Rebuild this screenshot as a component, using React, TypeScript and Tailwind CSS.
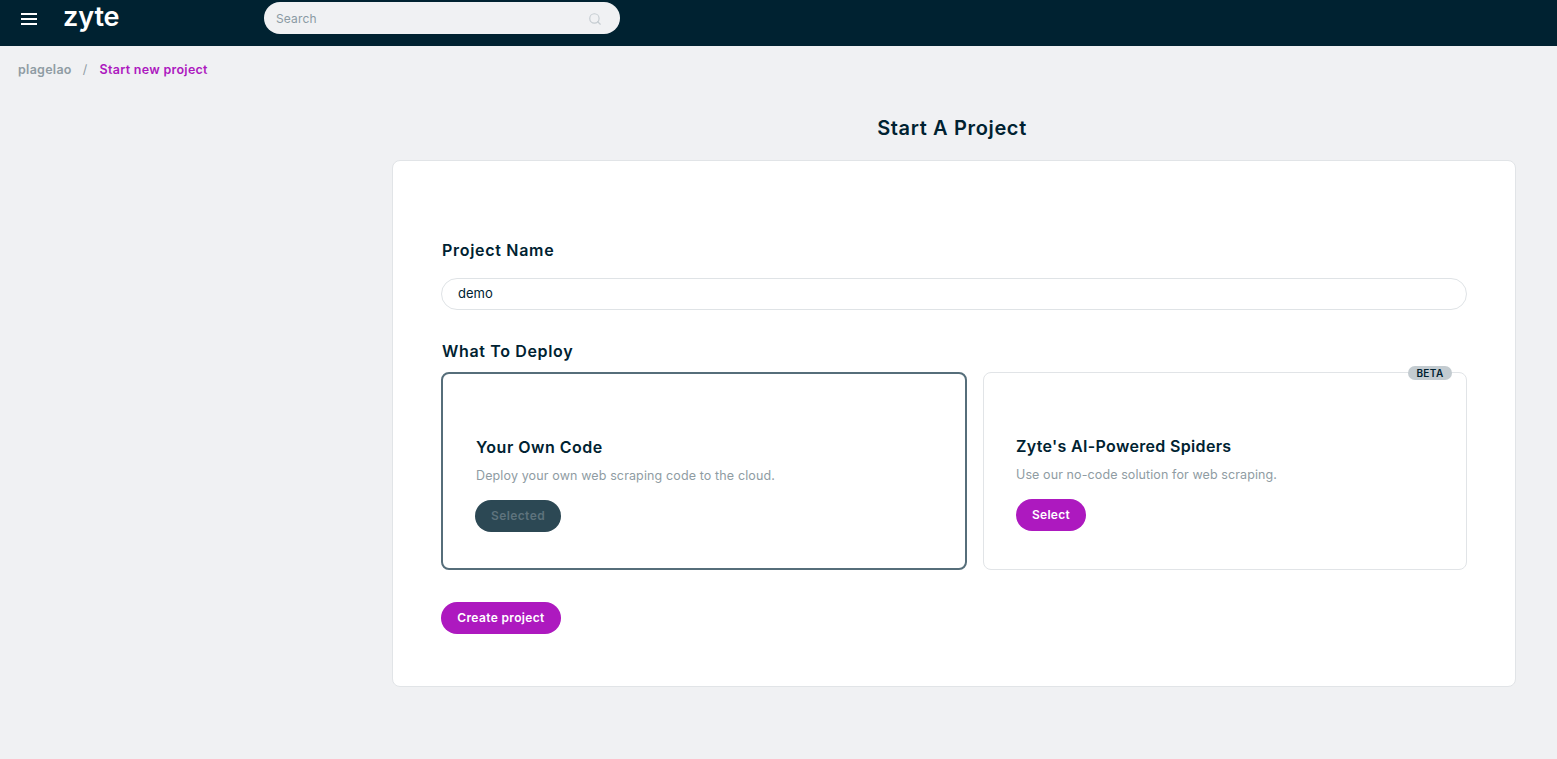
import { Search } from 'lucide-react';

const font = { fontFamily: 'Inter, "Liberation Sans", sans-serif' };

export default function App() {
  return (
    <div className="min-h-[759px] bg-[#f0f1f3]" style={font}>
      <header className="flex h-[46px] items-start bg-[#002231]">
        <div className="mt-[13px] ml-[21px] flex w-4 flex-col gap-[3px]">
          <span className="h-[2px] bg-white"></span>
          <span className="h-[2px] bg-white"></span>
          <span className="h-[2px] bg-white"></span>
        </div>
        <span className="ml-[26px] w-[57px] text-[27px] leading-[34px] font-semibold tracking-[-0.1px] text-white">zyte</span>
        <div className="mt-[2px] ml-[144px] flex h-8 w-[356px] items-center justify-between rounded-full bg-[#f0f1f3] pt-px pr-[18px] pl-3">
          <span className="text-xs tracking-[0.15px] text-[#8a9aa3]">Search</span>
          <Search className="h-[14px] w-[14px] text-[#c5ccd1]" strokeWidth={2} />
        </div>
      </header>

      <nav className="flex h-[47px] items-center pt-[2px] pl-[18px] text-[12.5px] font-semibold tracking-[0.28px]">
        <span className="text-[#8f9ca3]">plagelao</span>
        <span className="ml-[11px] font-normal text-[#8f9ca3]">/</span>
        <span className="ml-[12px] text-[#ad19bf]">Start new project</span>
      </nav>

      <main className="ml-[392px] w-[1124px]">
        <h1 className="mt-[21px] h-[46px] pr-1 text-center text-[20px] leading-7 font-semibold tracking-[0.65px] text-[#002231]">Start A Project</h1>

        <section className="h-[527px] rounded-lg border border-[#e1e4e7] bg-white px-12 pt-[79px]">
          <h2 className="ml-px text-[16px] leading-5 font-semibold tracking-[0.7px] text-[#002231]">Project Name</h2>
          <div className="mt-[18px] flex h-8 items-center rounded-full border border-[#dfe3e6] pl-4 text-[13px] text-[#002231]">demo</div>

          <h2 className="mt-[31px] ml-px text-[16px] leading-5 font-semibold tracking-[0.65px] text-[#002231]">What To Deploy</h2>
          <div className="mt-[11px] flex gap-4">
            <div className="flex h-[198px] w-[526px] flex-col rounded-lg border-2 border-[#566e7a] pt-[63px] pl-[32px]">
              <h3 className="ml-px text-[16px] leading-5 font-semibold tracking-[0.5px] text-[#002231]">Your Own Code</h3>
              <p className="mt-[9px] ml-px text-[12.5px] leading-5 tracking-[0.13px] text-[#8f9ca3]">Deploy your own web scraping code to the cloud.</p>
              <div className="mt-[14px] flex h-8 w-[86px] items-center justify-center rounded-full bg-[#2c4854] text-xs font-semibold tracking-[0.4px] text-[#5e737d]">Selected</div>
            </div>

            <div className="relative flex h-[198px] w-[484px] flex-col rounded-lg border border-[#e1e4e7] pt-[63px] pl-[32px]">
              <span className="absolute -top-[7px] right-[14px] flex h-[14px] w-[44px] items-center justify-center rounded-full bg-[#c3cbd0] text-[10px] font-semibold tracking-[0.4px] text-[#002231]">BETA</span>
              <h3 className="text-[16px] leading-5 font-semibold tracking-[0.33px] text-[#002231]">Zyte's AI-Powered Spiders</h3>
              <p className="mt-[9px] text-[12.5px] leading-5 tracking-[0.1px] text-[#8f9ca3]">Use our no-code solution for web scraping.</p>
              <div className="mt-[14px] flex h-8 w-[70px] items-center justify-center rounded-full bg-[#ad19bf] text-xs font-semibold tracking-[0.3px] text-white">Select</div>
            </div>
          </div>

          <div className="mt-8 flex h-8 w-[120px] items-center justify-center rounded-full bg-[#ad19bf] text-xs font-semibold tracking-[0.35px] text-white">Create project</div>
        </section>
      </main>
    </div>
  );
}
